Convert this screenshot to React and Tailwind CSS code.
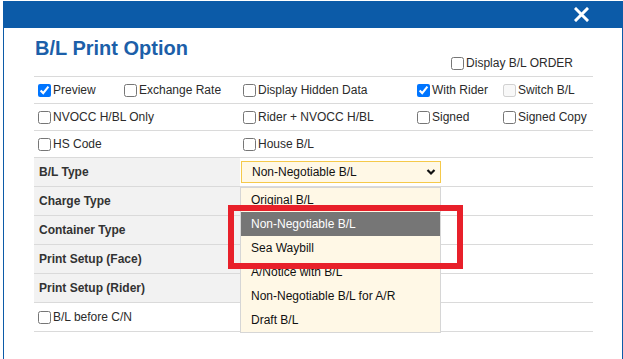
import React from 'react';

const checkRows = [
  [
    { label: 'Preview', checked: true },
    { label: 'Exchange Rate' },
    { label: 'Display Hidden Data' },
    { label: 'With Rider', checked: true },
    { label: 'Switch B/L', disabled: true },
  ],
  [{ label: 'NVOCC H/BL Only' }, null, { label: 'Rider + NVOCC H/BL' }, { label: 'Signed' }, { label: 'Signed Copy' }],
  [{ label: 'HS Code' }, null, { label: 'House B/L' }, null, null],
];

const fieldRows = ['B/L Type', 'Charge Type', 'Container Type', 'Print Setup (Face)', 'Print Setup (Rider)'];

const options = [
  'Original B/L',
  'Non-Negotiable B/L',
  'Sea Waybill',
  'A/Notice with B/L',
  'Non-Negotiable B/L for A/R',
  'Draft B/L',
];

const Check = ({ label, checked, disabled }) => (
  <label className="flex items-center whitespace-nowrap text-[12px] text-[#2b2b2b]">
    <input type="checkbox" defaultChecked={checked} disabled={disabled} className="m-0 ml-[4px] mr-[2px] h-[13px] w-[13px]" />
    <span>{label}</span>
  </label>
);

const App = () => (
  <div className="relative h-[359px] w-[623px] overflow-hidden bg-white pl-[3px] pt-[1px] font-['Liberation_Sans',Arial,sans-serif]">
    <div className="flex h-[400px] flex-col border-x border-[#0c5ba8]">
      <div className="flex h-[27px] shrink-0 items-center justify-end bg-[#0c5ba8] pr-[33px]">
        <svg width="15" height="15" viewBox="0 0 15 15">
          <path d="M2 2 L13 13 M13 2 L2 13" stroke="white" strokeWidth="3" strokeLinecap="square" />
        </svg>
      </div>

      <div className="pl-[30px] pr-[29px] pt-[9px]">
        <h1 className="pl-[1px] text-[20px] font-bold leading-[23px] text-[#1c5fa9]">B/L Print Option</h1>
        <div className="mt-[-5px] flex h-[16px] items-center justify-end pr-[20px]">
          <Check label="Display B/L ORDER" />
        </div>

        <div className="mt-[5px] border-t border-[#dadada]">
          {checkRows.map((row, i) => (
            <div key={i} className="grid h-[27px] grid-cols-[86px_119px_174px_86px_1fr] items-center border-b border-[#dadada]">
              {row.map((cell, j) => (
                <div key={j} className="min-w-0">
                  {cell && <Check {...cell} />}
                </div>
              ))}
            </div>
          ))}

          {fieldRows.map((name, i) => (
            <div key={name} className="flex h-[29px] border-b border-[#dadada]">
              <div className="flex w-[206px] items-center bg-[#f2f2f2] pl-[5px] text-[12px] font-bold text-[#333]">{name}</div>
              <div className="flex flex-1 items-center pl-[1px]">
                {i === 0 && (
                  <div className="flex h-[22px] w-[200px] items-center justify-between border border-[#f5c94a] bg-[#fff8e6] pl-[10px] pr-[4px] text-[12px] text-[#111]">
                    <span>Non-Negotiable B/L</span>
                    <svg width="10" height="8" viewBox="0 0 10 8">
                      <path d="M1.5 2 L5 5.5 L8.5 2" fill="none" stroke="#111" strokeWidth="2.2" />
                    </svg>
                  </div>
                )}
              </div>
            </div>
          ))}

          <div className="flex h-[29px] items-center border-b border-[#dadada]">
            <Check label="B/L before C/N" />
          </div>
        </div>
      </div>
    </div>

    <ul className="absolute left-[240px] top-[187px] w-[201px] border border-[#d6d6d6] bg-[#fff8e6] text-[12px] text-[#111]">
      {options.map((opt, i) => (
        <li
          key={opt}
          className={`flex h-[24px] items-center pl-[10px] ${i === 1 ? 'bg-[#767676] text-white' : ''}`}
        >
          {opt}
        </li>
      ))}
    </ul>

    <div className="absolute left-[228px] top-[205px] h-[64px] w-[235px] border-[6px] border-[#e8202a]" />
  </div>
);

export default App;
